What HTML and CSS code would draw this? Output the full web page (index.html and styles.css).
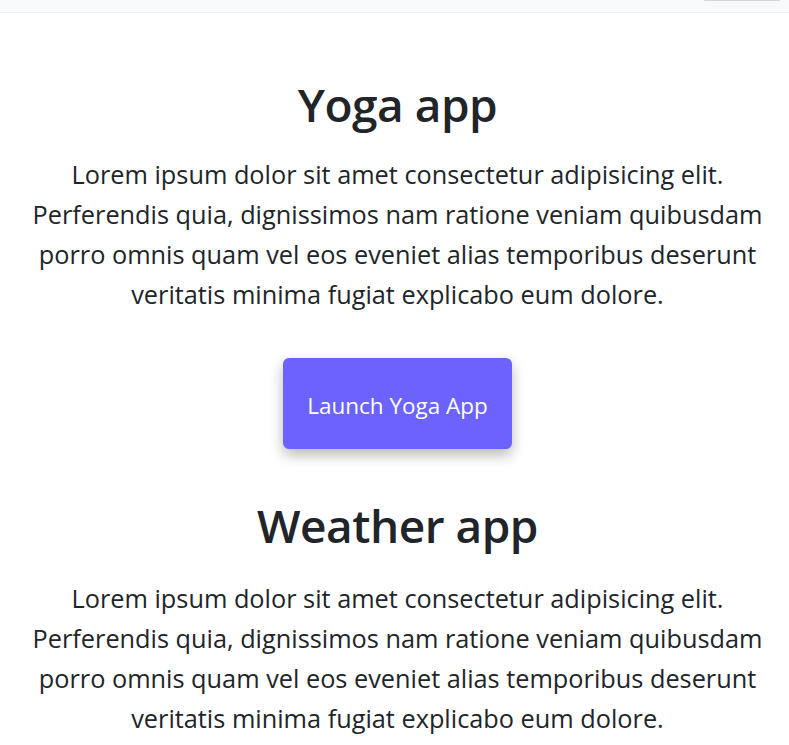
FILE: index.html
```html
<!DOCTYPE html>
<html lang="en">
<head>
<meta charset="utf-8">
<title>Apps</title>
<link rel="stylesheet" href="styles.css">
</head>
<body>
<header class="navbar">
  <div class="toggler"></div>
</header>
<main class="content">
  <section class="app app-yoga">
    <h1 class="app-title">Yoga app</h1>
    <p class="app-text">Lorem ipsum dolor sit amet consectetur adipisicing elit. Perferendis quia, dignissimos nam ratione veniam quibusdam porro omnis quam vel eos eveniet alias temporibus deserunt veritatis minima fugiat explicabo eum dolore.</p>
    <a class="app-btn" href="#">Launch Yoga App</a>
  </section>
  <section class="app app-weather">
    <h2 class="app-title">Weather app</h2>
    <p class="app-text">Lorem ipsum dolor sit amet consectetur adipisicing elit. Perferendis quia, dignissimos nam ratione veniam quibusdam porro omnis quam vel eos eveniet alias temporibus deserunt veritatis minima fugiat explicabo eum dolore.</p>
  </section>
</main>
</body>
</html>
```

FILE: styles.css
```css
html, body {
  margin: 0;
  padding: 0;
  background: #ffffff;
}
body {
  font-family: "Open Sans", "Noto Sans", sans-serif;
  color: #212529;
  overflow: hidden;
}
.navbar {
  height: 12px;
  background: #f8f9fa;
  border-bottom: 1px solid #eef0f2;
  display: flex;
  justify-content: flex-end;
  padding-right: 9px;
}
.toggler {
  width: 76px;
  height: 1px;
  background: #d3d6da;
  border-radius: 0 0 2px 2px;
}
.content {
  padding: 0 20px 0 26px;
}
.app {
  display: flex;
  flex-direction: column;
  align-items: center;
  text-align: center;
}
.app-title {
  margin: 0;
  font-size: 46px;
  font-weight: 600;
  line-height: 58px;
  letter-spacing: -0.5px;
}
.app-yoga .app-title {
  margin-top: 62px;
}
.app-weather .app-title {
  margin-top: 47px;
}
.app-text {
  margin: 21px 0 0;
  font-size: 25.3px;
  line-height: 40px;
  font-weight: 400;
}
.app-weather .app-text {
  margin-top: 24px;
}
.app-btn {
  margin-top: 44px;
  width: 229px;
  height: 91px;
  display: flex;
  align-items: center;
  justify-content: center;
  padding-top: 3px;
  box-sizing: border-box;
  background: #6c63ff;
  color: #ffffff;
  text-decoration: none;
  font-size: 22.5px;
  border-radius: 6px;
  box-shadow: 0 6px 14px rgba(0, 0, 0, 0.28);
}
```
